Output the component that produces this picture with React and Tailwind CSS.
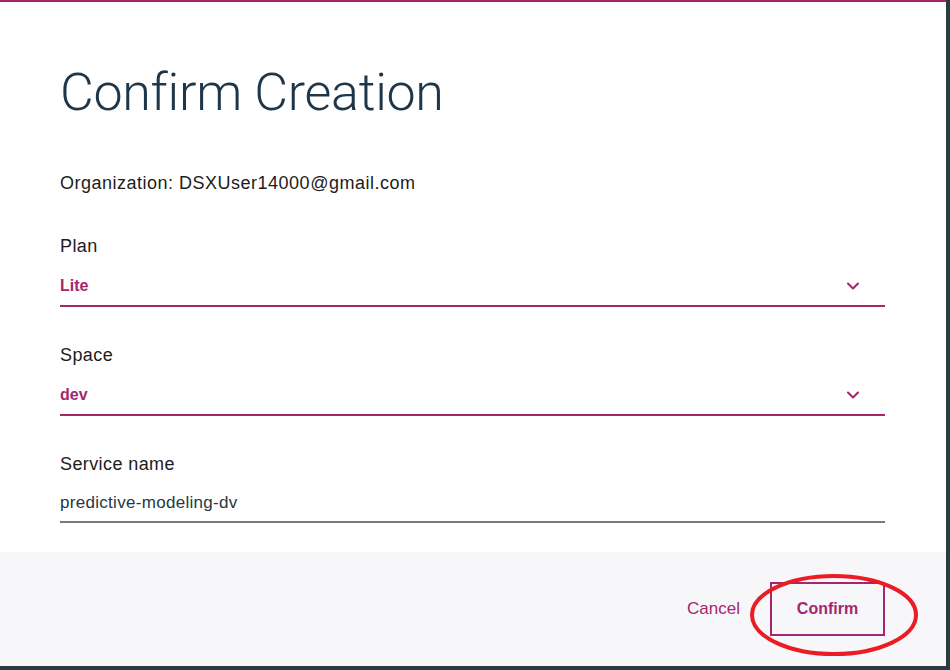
import { ChevronDown } from 'lucide-react'

function SelectField({ label, value }) {
  return (
    <div className="flex flex-col">
      <label className="text-[18px] tracking-[0.4px] text-[#1c1c1c] leading-none">{label}</label>
      <div className="mt-[21px] flex items-center justify-between border-b-2 border-[#a6266e] pb-[9px]">
        <span className="text-[16px] font-bold text-[#a6266e] leading-none">{value}</span>
        <ChevronDown size={20} strokeWidth={2.5} className="text-[#a6266e] mr-[22px]" />
      </div>
    </div>
  )
}

export default function App() {
  return (
    <div
      className="w-[950px] h-[670px] bg-[#2b3a45] overflow-hidden"
      style={{ fontFamily: '"Liberation Sans", Arial, sans-serif' }}
    >
      <div className="relative w-[946px] h-[666px] bg-white border-t-2 border-[#a6266e] flex flex-col">
        {/* Body */}
        <div className="flex-1 px-[60px]">
          <h1
            className="mt-[65px] text-[52px] font-light text-[#1f3649] leading-none tracking-[-0.3px]"
            style={{ fontFamily: 'Roboto, "Liberation Sans", sans-serif' }}
          >
            Confirm Creation
          </h1>

          <p className="mt-[55px] text-[18px] tracking-[0.5px] text-[#1c1c1c] leading-none">
            Organization: DSXUser14000@gmail.com
          </p>

          <div className="w-[825px]">
            <div className="mt-[45px]">
              <SelectField label="Plan" value="Lite" />
            </div>
            <div className="mt-[39px]">
              <SelectField label="Space" value="dev" />
            </div>

            <div className="mt-[39px] flex flex-col">
              <label className="text-[18px] tracking-[0.4px] text-[#1c1c1c] leading-none">Service name</label>
              <div className="mt-[21px] border-b-2 border-[#7a7a7a] pb-[10px] leading-none">
                <span className="text-[17px] tracking-[0.3px] text-[#253746] leading-none">predictive-modeling-dv</span>
              </div>
            </div>
          </div>
        </div>

        {/* Footer */}
        <div className="h-[114px] bg-[#f7f7f9] flex items-center justify-end pr-[61px]">
          <button className="text-[17px] text-[#a6266e] mr-[30px]">Cancel</button>
          <button className="w-[115px] h-[54px] border-2 border-[#a6266e] text-[16px] font-bold text-[#a6266e]">
            Confirm
          </button>
        </div>

        {/* Red annotation ellipse */}
        <svg
          className="absolute left-[748px] top-[570px] pointer-events-none"
          width="172"
          height="86"
          viewBox="0 0 172 86"
        >
          <ellipse cx="86" cy="43" rx="82" ry="39" fill="none" stroke="#ea1c24" strokeWidth="4" />
        </svg>
      </div>
    </div>
  )
}
